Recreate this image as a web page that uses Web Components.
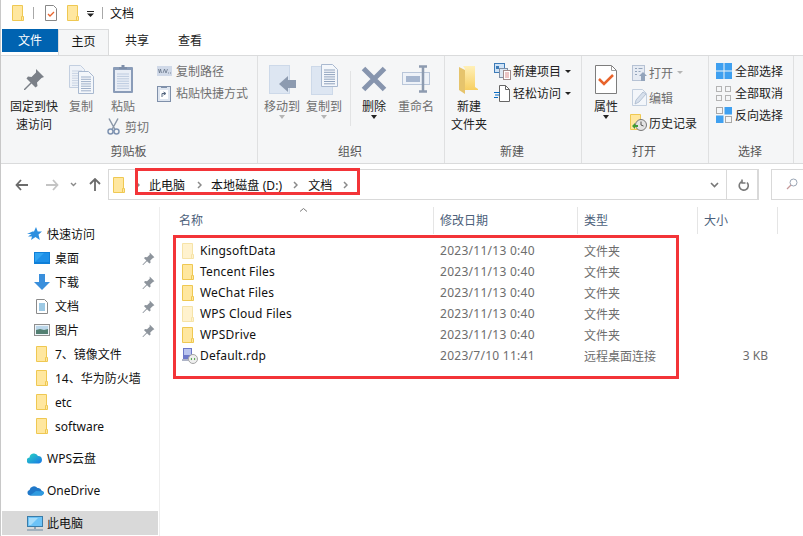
<!DOCTYPE html>
<html>
<head>
<meta charset="utf-8">
<title>文档</title>
<style>
  html, body { margin: 0; height: 536px; overflow: hidden; background: #fff; }
  body { font: 12px "Noto Sans", "Noto Sans CJK SC", sans-serif; color: #1a1a1a; }
</style>
</head>
<body>
<explorer-window>
  <title-bar slot="top"></title-bar>
  <ribbon-tabs slot="top"></ribbon-tabs>
  <file-ribbon slot="top"></file-ribbon>
  <address-bar slot="top"></address-bar>
  <nav-pane slot="left"></nav-pane>
  <file-list slot="main"></file-list>
</explorer-window>

<script>
const folderSvg = (w, h, op) => `<svg width="${w}" height="${h}" viewBox="0 0 12 16" style="opacity:${op || 1};display:block"><path d="M.5.5h10v11h1v4H.5z" fill="#ffe79f" stroke="#efc852"/><path d="M10.5 11.5h-1v4" fill="none" stroke="#efc852"/></svg>`;
const pinSmall = `<svg width="13" height="13" viewBox="0 0 22 22"><path d="M13 1l8 8-2.5 1-4.5 4.5.5 3.5-2 1.5-4-4-6.5 6.5H1v-1l6.5-6.5-4-4 1.5-2 3.5.5 4.5-4.5z" fill="#8d949c"/></svg>`;
const docLines = (x, y, n, gap, w) => Array.from({ length: n }, (_, i) => `M${x} ${y + i * gap}h${w}`).join('');

const icons = {
  pin: `<svg width="22" height="22" viewBox="0 0 22 22"><path d="M13 1l8 8-2.5 1-4.5 4.5.5 3.5-2 1.5-4-4-6.5 6.5H1v-1l6.5-6.5-4-4 1.5-2 3.5.5 4.5-4.5z" fill="#7b8088"/></svg>`,
  copy: `<svg width="25" height="29" viewBox="0 0 25 29"><path d="M.5.5h11l4 4v18H.5z" fill="#eef2f8" stroke="#c3cfe0"/><path d="${docLines(3, 6, 7, 2.4, 10)}" stroke="#c8d3e3"/><path d="M9.5 6.5h10l5 5v17h-15z" fill="#f4f7fb" stroke="#a9b9d0"/><path d="${docLines(12, 12, 7, 2.3, 10)}" stroke="#9fb0c9"/></svg>`,
  paste: `<svg width="22" height="30" viewBox="0 0 22 30"><rect x="1" y="3" width="20" height="26" rx="1" fill="#8a9cb8"/><rect x="3" y="6" width="16" height="21" fill="#e9eef6"/><path d="${docLines(5, 10, 7, 2.4, 12)}" stroke="#bccadf"/><path d="M7 5V3h2.500V1h3v2H15v2z" fill="#7d8ea9"/></svg>`,
  scissors: `<svg width="13" height="17" viewBox="0 0 13 17"><path d="M2 .5l6 11M11 .5l-6 11" stroke="#8b97a8" stroke-width="1.500" fill="none"/><circle cx="3.500" cy="13.500" r="2.500" fill="none" stroke="#7f93b1" stroke-width="1.500"/><circle cx="9.500" cy="13.500" r="2.500" fill="none" stroke="#7f93b1" stroke-width="1.500"/></svg>`,
  copyPath: `<svg width="15" height="10" viewBox="0 0 15 10"><rect width="15" height="10" fill="#d0d9e8"/><path d="M1.500 3l1 4 1-4 1 4M6 7l1.500-4L9 7l1.500-4M11 7h1M13 7h1" stroke="#5d6b80" stroke-width=".7" fill="none"/></svg>`,
  pasteLink: `<svg width="14" height="17" viewBox="0 0 14 17"><rect x=".5" y="1.500" width="13" height="15" fill="#dfe6f0" stroke="#7f90aa"/><path d="M4 3V1h6v2z" fill="#7f90aa"/><rect x="3" y="5" width="8" height="9" fill="#fff"/><path d="M5 12V8.500h3M6.500 7L9 8.500 6.500 10" stroke="#55677f" fill="none"/></svg>`,
  moveTo: `<svg width="27" height="29" viewBox="0 0 27 29"><rect x=".5" y=".5" width="20" height="28" fill="#dde6f2" stroke="#cdd9e9"/><path d="M10 19l9-8v4h8v8h-8v4z" fill="#8d9bb0"/></svg>`,
  copyTo: `<svg width="27" height="31" viewBox="0 0 27 31"><rect x=".5" y="2.500" width="21" height="28" fill="#dde6f2" stroke="#cdd9e9"/><path d="M10.500.5h11l5 5v17h-16z" fill="#f4f7fb" stroke="#a9b9d0"/><path d="${docLines(13, 6, 7, 2.3, 11)}" stroke="#8fa2bd"/></svg>`,
  del: `<svg width="26" height="26" viewBox="0 0 26 26"><path d="M2.500 2.500l21 21M23.500 2.500l-21 21" stroke="#8795ae" stroke-width="5"/></svg>`,
  rename: `<svg width="28" height="28" viewBox="0 0 28 28"><rect x=".5" y="7.500" width="27" height="12" fill="#eef2f8" stroke="#b9c6d9"/><rect x="4" y="11" width="14" height="6" fill="#a6b6cf"/><path d="M17 1.500h8M17 26.500h8M21 2v24" stroke="#8d9bb0" stroke-width="2.500" fill="none"/></svg>`,
  newFolder: `<svg width="20" height="29" viewBox="0 0 20 29"><defs><linearGradient id="nf" x1="0" y1="0" x2="0" y2="1"><stop offset="0" stop-color="#fff0b8"/><stop offset="1" stop-color="#f7cf62"/></linearGradient></defs><path d="M4 1h12v21l3 2v1H6V4z" fill="url(#nf)"/><path d="M0 2l6 3v24l-6-4z" fill="#e6c46c"/></svg>`,
  newItem: `<svg width="17" height="17" viewBox="0 0 17 17"><rect x=".5" y=".5" width="10" height="9" fill="#cfe3f7" stroke="#3e7cb8"/><rect x="2" y="3" width="3" height="3" fill="#3e7cb8"/><rect x="5.500" y="5.500" width="8" height="9" fill="#dbe7f3" stroke="#7f8fa5"/><rect x="9.500" y="7.500" width="7" height="9" fill="#fff" stroke="#a08b8b"/><path d="M11 10h4M11 12h4M11 14h4" stroke="#d98a8a"/></svg>`,
  easyAccess: `<svg width="16" height="17" viewBox="0 0 16 17"><path d="M5.500.5h6l4 4v12h-10z" fill="#fff" stroke="#666"/><path d="M11.500.5v4h4" fill="none" stroke="#666"/><path d="M0 7.500h6M1 10h5M0 12.500h4" stroke="#0a6cc2"/></svg>`,
  props: `<svg width="22" height="29" viewBox="0 0 22 29"><path d="M.5.5h16l5 5v23H.5z" fill="#fff" stroke="#7d7d7d"/><path d="M16.500.5v5h5" fill="none" stroke="#9a9a9a"/><path d="M4 14l5 5 9-9" fill="none" stroke="#e8642c" stroke-width="2.500"/></svg>`,
  open: `<svg width="16" height="16" viewBox="0 0 16 16"><rect x=".5" y=".5" width="12" height="15" fill="#e6ebf3" stroke="#b6c2d4"/><path d="M3 3.500h2M3 6.500h2M3 9.500h2M6.500 3.500h4M6.500 6.500h2" stroke="#93a4bb"/><path d="M11 7l4 4h-2v5h-4v-5H7z" fill="#93a4bb"/></svg>`,
  edit: `<svg width="16" height="17" viewBox="0 0 16 17"><path d="M.5.500h10l4 4v12H.5z" fill="#f3f6fa" stroke="#c3cfde"/><path d="M3 15l1-4 7-8 3 2-7 8z" fill="#d7e0ec" stroke="#a8b7cb" stroke-width=".8"/></svg>`,
  history: `<svg width="17" height="17" viewBox="0 0 17 17"><path d="M.5.500h10v8h1v7h-11z" fill="#ffe79f" stroke="#efc852"/><circle cx="11" cy="11" r="5.500" fill="#e4e4e4" stroke="#777"/><path d="M11 7.500V11l2.500 1" stroke="#555" fill="none"/><path d="M2 12l3-3v2h3v2H5v2z" fill="#3f9b35"/></svg>`,
  selAll: `<svg width="16" height="16" viewBox="0 0 16 16"><g fill="#3fa0f0"><rect width="7.500" height="7.500"/><rect x="8.500" width="7.500" height="7.500"/><rect y="8.500" width="7.500" height="7.500"/><rect x="8.500" y="8.500" width="7.500" height="7.500"/></g></svg>`,
  selNone: `<svg width="15" height="15" viewBox="0 0 15 15"><g fill="none" stroke="#b4b4b4"><rect x=".5" y=".5" width="5" height="5"/><rect x="9.500" y=".5" width="5" height="5"/><rect x=".5" y="9.500" width="5" height="5"/><rect x="9.500" y="9.500" width="5" height="5"/></g></svg>`,
  selInv: `<svg width="16" height="16" viewBox="0 0 16 16"><g fill="none" stroke="#a8a8a8"><rect x=".5" y=".5" width="6" height="6"/><rect x="9.500" y="9.500" width="6" height="6"/></g><rect x="8.500" width="7.500" height="7.500" fill="#3fa0f0"/><rect y="8.500" width="7.500" height="7.500" fill="#3fa0f0"/></svg>`,
  star: `<svg width="15" height="14" viewBox="0 0 15 14"><path d="M9 0l1.700 4.500H15l-3.500 3 1.300 5.500L8.500 10 4 13l1-3.500H1L4.500 7H0l5.500-2.500H7z" fill="#2d8fdf"/></svg>`,
  desktop: `<svg width="16" height="12" viewBox="0 0 16 12"><rect width="16" height="12" fill="#0f7fd8"/><path d="M1 1h14v9H1z" fill="#31a5f2"/><path d="M1 10l9-9h5v9z" fill="#1e90e8"/></svg>`,
  down: `<svg width="16" height="16" viewBox="0 0 16 16"><path d="M5 0h6v8h5l-8 8-8-8h5z" fill="#3a8fdc"/></svg>`,
  doc: `<svg width="12" height="15" viewBox="0 0 12 15"><path d="M.5.500h8l3 3v11H.5z" fill="#fff" stroke="#8a8a8a"/><path d="M3 5h6M3 7h6M3 9h6M3 11h6" stroke="#3b93c9"/></svg>`,
  pic: `<svg width="16" height="12" viewBox="0 0 16 12"><rect x=".5" y=".5" width="15" height="11" fill="#eef4f8" stroke="#8f8f8f"/><rect x="2" y="2" width="12" height="4" fill="#bcd7ea"/><path d="M2 6l4-1 4 1 4-1v5H2z" fill="#527f72"/></svg>`,
  wpsCloud: `<svg width="15" height="12" viewBox="0 0 15 12"><defs><linearGradient id="wc" x1="0" y1="0" x2="1" y2="1"><stop offset="0" stop-color="#28d7c2"/><stop offset="1" stop-color="#1976e6"/></linearGradient></defs><path d="M3 11.500a3 3 0 0 1-.5-6A4.500 4.500 0 0 1 11 4a3.800 3.800 0 0 1 1 7.500z" fill="url(#wc)"/></svg>`,
  oneDrive: `<svg width="17" height="11" viewBox="0 0 17 11"><path d="M3 10.500a2.800 2.800 0 0 1-.5-5.500A4.500 4.500 0 0 1 10.500 3a3.600 3.600 0 0 1 4 2.500 2.600 2.600 0 0 1 0 5z" fill="#1f78c9"/><path d="M3 10.500h11.500a2.500 2.500 0 0 0 2-4L9 6z" fill="#2f9be0"/></svg>`,
  pc: `<svg width="16" height="15" viewBox="0 0 16 15"><rect x=".5" y=".5" width="15" height="10" fill="#6cc3f7" stroke="#3a7ca8"/><path d="M2 2h9L4 9H2z" fill="#a6dcfa"/><path d="M7 11h2v2H7z" fill="#8fa3b3"/><path d="M0 14h16" stroke="#8fa3b3" stroke-width="1.500"/></svg>`,
  rdp: `<svg width="16" height="16" viewBox="0 0 16 16"><rect x="1" y="0" width="9" height="11" fill="#6d78c9"/><rect x="2" y="1" width="7" height="6" fill="#b9c4ee"/><path d="M0 11h10v2H0z" fill="#aeb4c7"/><circle cx="11" cy="11" r="4.500" fill="#efefef" stroke="#a5a5a5"/><path d="M8.500 11l1.500-1.200v2.400zM13.500 11L12 9.800v2.400z" fill="#3f9b35"/></svg>`
};

class BaseElement extends HTMLElement {
  constructor() {
    super();
    this._root = this.attachShadow({ mode: 'open' });
  }
}

class ExplorerWindow extends BaseElement {
  connectedCallback() {
    this._root.innerHTML = `<style>
      :host { display: grid; grid-template-columns: 159px 1fr; grid-template-rows: auto 1fr; height: 536px; border-left: 1px solid #c8c8c8; box-sizing: border-box; }
      .top { grid-column: 1 / 3; display: block; }
    </style>
    <div class="top"><slot name="top"></slot></div>
    <slot name="left"></slot>
    <slot name="main"></slot>`;
  }
}

class TitleBar extends BaseElement {
  connectedCallback() {
    this._root.innerHTML = `<style>
      :host { display: flex; align-items: center; height: 28px; padding: 0 0 2px 11px; box-sizing: border-box; font-size: 12px; color: #111; }
      i { width: 1px; height: 12px; background: #a8a8a8; }
      svg { display: block; }
    </style>
    ${folderSvg(12, 16)}
    <i style="margin:0 11px 0 9px"></i>
    <svg width="12" height="16" viewBox="0 0 12 16" style="margin-right:10px"><path d="M.5.500h8l3 3v12H.5z" fill="#fff" stroke="#888"/><path d="M3 9l2 2 4-4" fill="none" stroke="#e8642c" stroke-width="1.300"/></svg>
    ${folderSvg(12, 16)}
    <svg width="7" height="6" viewBox="0 0 7 6" style="margin:2px 8px 0 8px"><path d="M0 0h7v1H0zM0 2.500h7L3.500 6z" fill="#222"/></svg>
    <i style="margin-right:7px"></i>
    <span>文档</span>`;
  }
}

class RibbonTabs extends BaseElement {
  connectedCallback() {
    this._root.innerHTML = `<style>
      :host { display: flex; height: 28px; padding: 1px 0 0 1px; box-sizing: border-box; border-bottom: 1px solid #dadbdc; }
      div { height: 23px; line-height: 24px; text-align: center; color: #222; }
      .file { width: 56px; background: #0063b1; color: #fff; }
      .on { width: 51px; height: 26px; box-sizing: border-box; background: #f5f6f7; border: 1px solid #dadbdc; border-bottom: 0; position: relative; z-index: 1; line-height: 23px; color: #111; }
      .t { width: 54px; }
    </style>
    <div class="file">文件</div><div class="on">主页</div><div class="t" style="margin-left:1px">共享</div><div class="t" style="margin-left:-1px">查看</div>`;
  }
}

class RibbonGroup extends BaseElement {
  connectedCallback() {
    this._root.innerHTML = `<style>
      :host { display: flex; flex-direction: column; height: 107px; box-sizing: border-box; border-right: 1px solid #dfe0e1; padding-top: 4px; }
      .body { flex: 1; display: flex; align-items: flex-start; }
      .label { height: 20px; line-height: 18px; text-align: center; color: #555; padding-right: 2px; }
    </style>
    <div class="body"><slot></slot></div>
    <div class="label">${this.getAttribute('label')}</div>`;
  }
}

class BigButton extends BaseElement {
  connectedCallback() {
    const off = this.hasAttribute('off');
    const arrow = this.getAttribute('arrow');
    const lines = this.getAttribute('label').split('|').map(l => `<div>${l}</div>`).join('');
    this._root.innerHTML = `<style>
      :host { display: flex; flex-direction: column; align-items: center; color: ${off ? '#6f6f6f' : '#222'}; }
      .ico { height: 38px; display: flex; align-items: center; justify-content: center; }
      .txt { line-height: 18px; text-align: center; white-space: nowrap; }
      .arr { width: 0; height: 0; margin-top: -1px; border: 3.500px solid transparent; border-bottom: 0; border-top: 4px solid ${arrow === 'gray' ? '#b5b5b5' : '#222'}; }
    </style>
    <div class="ico">${icons[this.getAttribute('icon')]}</div>
    <div class="txt">${lines}</div>
    ${arrow ? '<div class="arr"></div>' : ''}`;
  }
}

class SmallButton extends BaseElement {
  connectedCallback() {
    const off = this.hasAttribute('off');
    const arrow = this.getAttribute('arrow');
    const h = this.getAttribute('h') || 22;
    this._root.innerHTML = `<style>
      :host { display: flex; align-items: center; height: ${h}px; color: ${off ? '#6f6f6f' : '#222'}; white-space: nowrap; }
      .ico { width: ${this.getAttribute('iw') || 19}px; display: flex; justify-content: flex-start; }
      svg { display: block; }
      .arr { width: 0; height: 0; margin-left: 4px; border: 3px solid transparent; border-bottom: 0; border-top: 3.500px solid ${arrow === 'gray' ? '#b5b5b5' : '#222'}; }
    </style>
    <div class="ico">${icons[this.getAttribute('icon')]}</div><span>${this.getAttribute('label')}</span>
    ${arrow ? '<div class="arr"></div>' : ''}`;
  }
}

class FileRibbon extends BaseElement {
  connectedCallback() {
    this._root.innerHTML = `<style>
      :host { display: flex; background: #f5f6f7; border-bottom: 1px solid #dadbdc; padding-left: 1px; height: 108px; box-sizing: border-box; font-size: 12px; }
      .stack { display: flex; flex-direction: column; }
      .vsep { width: 1px; height: 55px; background: #e2e3e4; margin-top: 11px; }
    </style>
    <ribbon-group label="剪贴板" style="width:256px">
      <big-button icon="pin" label="固定到快|速访问" style="width:56px;margin-left:4px"></big-button>
      <big-button off icon="copy" label="复制" style="width:38px"></big-button>
      <div class="stack" style="width:53px;margin-left:5px">
        <big-button off icon="paste" label="粘贴" style="width:36px"></big-button>
        <small-button off icon="scissors" label="剪切" iw="18" h="21" style="margin-left:2px"></small-button>
      </div>
      <div class="stack">
        <small-button off icon="copyPath" label="复制路径" style="margin-left:-1px"></small-button>
        <small-button off icon="pasteLink" label="粘贴快捷方式" style="margin-left:-1px"></small-button>
      </div>
    </ribbon-group>
    <ribbon-group label="组织" style="width:187px">
      <big-button off arrow="gray" icon="moveTo" label="移动到" style="width:42px;margin-left:3px"></big-button>
      <big-button off arrow="gray" icon="copyTo" label="复制到" style="width:42px"></big-button>
      <div class="vsep" style="margin-left:5px"></div>
      <big-button arrow="black" icon="del" label="删除" style="width:36px;margin-left:5px"></big-button>
      <big-button off icon="rename" label="重命名" style="width:48px"></big-button>
    </ribbon-group>
    <ribbon-group label="新建" style="width:137px">
      <big-button icon="newFolder" label="新建|文件夹" style="width:36px;margin-left:6px"></big-button>
      <div class="stack" style="margin-left:7px">
        <small-button icon="newItem" label="新建项目" arrow="black"></small-button>
        <small-button icon="easyAccess" label="轻松访问" arrow="black"></small-button>
      </div>
    </ribbon-group>
    <ribbon-group label="打开" style="width:127px">
      <big-button arrow="black" icon="props" label="属性" style="width:36px;margin-left:6px"></big-button>
      <div class="stack" style="margin-left:8px">
        <small-button off icon="open" label="打开" arrow="gray" h="25" iw="17"></small-button>
        <small-button off icon="edit" label="编辑" h="25" iw="17"></small-button>
        <small-button icon="history" label="历史记录" h="25" iw="19" style="margin-left:-2px"></small-button>
      </div>
    </ribbon-group>
    <ribbon-group label="选择" style="width:85px">
      <div class="stack" style="margin-left:7px">
        <small-button icon="selAll" label="全部选择"></small-button>
        <small-button icon="selNone" label="全部取消"></small-button>
        <small-button icon="selInv" label="反向选择"></small-button>
      </div>
    </ribbon-group>`;
  }
}

class AddressBar extends BaseElement {
  connectedCallback() {
    const chev = `<svg class="c" width="5" height="8" viewBox="0 0 5 8"><path d="M1 1l3 3-3 3" fill="none" stroke="#8a8a8a" stroke-width="1.500"/></svg>`;
    this._root.innerHTML = `<style>
      :host { display: flex; align-items: center; height: 43px; padding: 5px 0 7px 14px; box-sizing: border-box; position: relative; }
      svg { display: block; flex: none; }
      .nav { display: flex; align-items: center; width: 93px; flex: none; }
      .box { flex: none; width: 651px; height: 31px; box-sizing: border-box; border: 1px solid #d9d9d9; border-right-width: 2px; display: flex; align-items: center; padding-left: 4px; position: relative; }
      .crumbs { display: flex; align-items: center; margin-left: 10px; }
      .crumbs span { color: #111; }
      .c { margin-top: 1px; }
      .end { margin-left: auto; display: flex; align-items: center; height: 100%; }
      .rf { width: 31px; height: 100%; box-sizing: border-box; padding-left: 2px; border-left: 1px solid #d9d9d9; display: flex; align-items: center; justify-content: center; margin-left: 7px; }
      .search { flex: none; width: 40px; height: 31px; box-sizing: border-box; border: 1px solid #d9d9d9; margin-left: 12px; padding: 8px 0 0 14px; }
      .mark { position: absolute; left: 134px; top: 4px; width: 225px; height: 27px; box-sizing: border-box; border: 3px solid #f33438; }
    </style>
    <div class="nav">
      <svg width="13" height="12" viewBox="0 0 13 12"><path d="M6 1L1.500 6 6 11M2 6h11" fill="none" stroke="#6b6b6b" stroke-width="1.800"/></svg>
      <svg width="13" height="12" viewBox="0 0 13 12" style="margin-left:18px"><path d="M7 1l4.500 5L7 11M11 6H0" fill="none" stroke="#c4c4c4" stroke-width="1.800"/></svg>
      <svg width="7" height="5" viewBox="0 0 7 5" style="margin-left:11px"><path d="M1 1l2.500 2.500L6 1" fill="none" stroke="#8a8a8a" stroke-width="1.400"/></svg>
      <svg width="12" height="13" viewBox="0 0 12 13" style="margin-left:12px"><path d="M1 6l5-5 5 5M6 1.500V13" fill="none" stroke="#6b6b6b" stroke-width="1.800"/></svg>
    </div>
    <div class="box">
      ${folderSvg(12, 16)}
      <div class="crumbs">
        ${chev}<span style="margin:0 12px 0 9px">此电脑</span>
        ${chev}<span style="margin:0 11px 0 9px;letter-spacing:.1px">本地磁盘 (D:)</span>
        ${chev}<span style="margin:0 11px 0 10px">文档</span>
        ${chev}
      </div>
      <div class="end">
        <svg width="9" height="6" viewBox="0 0 9 6"><path d="M1 1l3.500 3.500L8 1" fill="none" stroke="#777" stroke-width="1.600"/></svg>
        <div class="rf"><svg width="11" height="12" viewBox="0 0 11 12"><path d="M4 1.800A4.500 4.500 0 1 0 8.500 3M3.500 0v3.500H7" fill="none" stroke="#7a7a7a" stroke-width="1.600" transform="translate(.5 .5)"/></svg></div>
      </div>
    </div>
    <div class="search"><svg width="12" height="12" viewBox="0 0 12 12"><circle cx="7.500" cy="4.500" r="3.500" fill="none" stroke="#9aa6b5"/><path d="M5 7L1 11" stroke="#c79a9a" stroke-width="1.200"/></svg></div>
    <div class="mark"></div>`;
  }
}

class NavRow extends BaseElement {
  connectedCallback() {
    const name = this.getAttribute('icon');
    const ico = name === 'folder' ? folderSvg(12, 16) : icons[name];
    const top = this.hasAttribute('top');
    this._root.innerHTML = `<style>
      :host { display: flex; align-items: center; height: 24px; color: #111; padding-left: ${top ? 26 : 30}px; position: relative; box-sizing: border-box; }
      :host([sel]) { background: #d9d9d9; width: 156px; margin-left: 1px; padding-left: 25px; }
      .ico { width: ${top ? 20 : 22}px; display: flex; justify-content: ${top ? 'flex-start' : 'center'}; margin-right: ${top ? 0 : 2}px; }
      svg { display: block; }
      .pin { position: absolute; left: 141px; top: 6px; }
    </style>
    <div class="ico">${ico}</div><span><slot></slot></span>
    ${this.hasAttribute('pin') ? `<div class="pin">${pinSmall}</div>` : ''}`;
  }
}

class NavPane extends BaseElement {
  connectedCallback() {
    this._root.innerHTML = `<style>
      :host { display: block; border-right: 1px solid #eeeeee; padding-top: 15px; position: relative; }
      .gap { height: 8px; }
    </style>
    <nav-row top icon="star">快速访问</nav-row>
    <nav-row pin icon="desktop">桌面</nav-row>
    <nav-row pin icon="down">下载</nav-row>
    <nav-row pin icon="doc">文档</nav-row>
    <nav-row pin icon="pic">图片</nav-row>
    <nav-row icon="folder">7、镜像文件</nav-row>
    <nav-row icon="folder">14、华为防火墙</nav-row>
    <nav-row icon="folder">etc</nav-row>
    <nav-row icon="folder">software</nav-row>
    <div class="gap"></div>
    <nav-row top icon="wpsCloud">WPS云盘</nav-row>
    <div class="gap"></div>
    <nav-row top icon="oneDrive">OneDrive</nav-row>
    <div class="gap" style="height:9px"></div>
    <nav-row top sel icon="pc">此电脑</nav-row>`;
  }
}

class FileRow extends BaseElement {
  connectedCallback() {
    const kind = this.getAttribute('kind');
    const ico = kind === 'rdp' ? icons.rdp : folderSvg(12, 16, kind === 'hidden' ? 0.5 : 1);
    this._root.innerHTML = `<style>
      :host { display: grid; grid-template-columns: 280px 144px 120px 64px; height: 21px; align-items: center; color: #6d6d6d; }
      .name { display: flex; align-items: center; color: #111; padding-left: 22px; }
      .ico { width: 18px; display: flex; } svg { display: block; }
      .n { letter-spacing: .2px; }
      .d { letter-spacing: .27px; }
      .size { text-align: right; }
    </style>
    <div class="name"><div class="ico">${ico}</div><span class="n">${this.getAttribute('name')}</span></div>
    <span class="d">${this.getAttribute('date')}</span>
    <span>${this.getAttribute('type')}</span>
    <span class="size">${this.getAttribute('size') || ''}</span>`;
  }
}

class FileList extends BaseElement {
  connectedCallback() {
    const d = '2023/11/13 0:40';
    const rows = [
      ['KingsoftData', 'hidden'], ['Tencent Files', 'folder'], ['WeChat Files', 'folder'],
      ['WPS Cloud Files', 'hidden'], ['WPSDrive', 'folder']
    ].map(r => `<file-row name="${r[0]}" kind="${r[1]}" date="${d}" type="文件夹"></file-row>`).join('');
    this._root.innerHTML = `<style>
      :host { display: block; position: relative; }
      .head { display: grid; grid-template-columns: 274px 144px 120px 80px; height: 25px; color: #4c607a; }
      .head div { padding: 0 0 0 6px; border-right: 1px solid #e5e5e5; line-height: 27px; }
      .head div:first-child { padding-left: 19px; }
      .sort { position: absolute; left: 139px; top: 0; }
      .rows { padding-top: 8px; }
      .mark { position: absolute; left: 13px; top: 28px; width: 506px; height: 144px; box-sizing: border-box; border: 3px solid #f33438; }
    </style>
    <div class="head"><div>名称</div><div>修改日期</div><div>类型</div><div>大小</div></div>
    <svg class="sort" width="9" height="5" viewBox="0 0 9 5"><path d="M1 4.500l3.500-3 3.500 3" fill="none" stroke="#7a7a7a"/></svg>
    <div class="rows">${rows}
      <file-row name="Default.rdp" kind="rdp" date="2023/7/10 11:41" type="远程桌面连接" size="3 KB"></file-row>
    </div>
    <div class="mark"></div>`;
  }
}

customElements.define('explorer-window', ExplorerWindow);
customElements.define('title-bar', TitleBar);
customElements.define('ribbon-tabs', RibbonTabs);
customElements.define('ribbon-group', RibbonGroup);
customElements.define('big-button', BigButton);
customElements.define('small-button', SmallButton);
customElements.define('file-ribbon', FileRibbon);
customElements.define('address-bar', AddressBar);
customElements.define('nav-row', NavRow);
customElements.define('nav-pane', NavPane);
customElements.define('file-row', FileRow);
customElements.define('file-list', FileList);
</script>
</body>
</html>
